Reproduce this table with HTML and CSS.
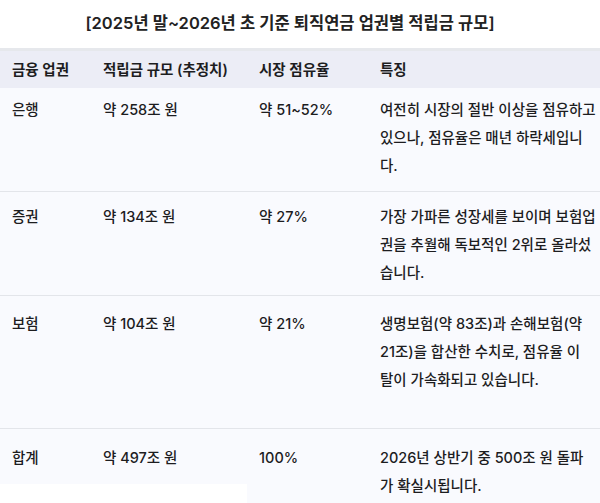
FILE: index.html
```html
<!DOCTYPE html>
<html lang="ko">
<head>
<meta charset="utf-8">
<link rel="stylesheet" href="styles.css">
</head>
<body>
<h1 class="title">[2025년 말~2026년 초 기준 퇴직연금 업권별 적립금 규모]</h1>
<div class="table">
  <div class="row head">
    <div class="cell">금융 업권</div>
    <div class="cell">적립금 규모 (추정치)</div>
    <div class="cell">시장 점유율</div>
    <div class="cell">특징</div>
  </div>
  <div class="row r1">
    <div class="cell">은행</div>
    <div class="cell">약 258조 원</div>
    <div class="cell">약 51~52%</div>
    <div class="cell">여전히 시장의 절반 이상을 점유하고<br>있으나, 점유율은 매년 하락세입니<br>다.</div>
  </div>
  <div class="row r2">
    <div class="cell">증권</div>
    <div class="cell">약 134조 원</div>
    <div class="cell">약 27%</div>
    <div class="cell">가장 가파른 성장세를 보이며 보험업<br>권을 추월해 독보적인 2위로 올라섰<br>습니다.</div>
  </div>
  <div class="row r3">
    <div class="cell">보험</div>
    <div class="cell">약 104조 원</div>
    <div class="cell">약 21%</div>
    <div class="cell">생명보험(약 83조)과 손해보험(약<br>21조)을 합산한 수치로, 점유율 이<br>탈이 가속화되고 있습니다.</div>
  </div>
  <div class="row r4">
    <div class="cell short">합계</div>
    <div class="cell short">약 497조 원</div>
    <div class="cell">100%</div>
    <div class="cell">2026년 상반기 중 500조 원 돌파<br>가 확실시됩니다.</div>
  </div>
</div>
</body>
</html>
```

FILE: styles.css
```css
html, body {
  margin: 0;
  padding: 0;
  background: #ffffff;
}
body {
  font-family: "Inter", "Noto Sans CJK KR", "Noto Sans", sans-serif;
  color: #1d1d1f;
  width: 600px;
  height: 503px;
  overflow: hidden;
}
.title {
  margin: 0;
  height: 48px;
  line-height: 46px;
  font-size: 16.5px;
  font-weight: 600;
  text-align: center;
  padding-right: 20px;
  color: #222;
}
.table {
  display: flex;
  flex-direction: column;
}
.row {
  display: grid;
  grid-template-columns: 91px 156px 121px 1fr;
  background: #f9fafe;
  border-bottom: 1px solid #e3e5ea;
  box-sizing: border-box;
  font-size: 14.5px;
  font-weight: 500;
  line-height: 28px;
}
.cell {
  padding: 0 8px 0 12px;
  white-space: nowrap;
}
.row.head {
  height: 40px;
  background: #ecedf6;
  border-top: 3px solid #e6e8ec;
  border-bottom: none;
  align-items: center;
  font-weight: 600;
  font-size: 14.5px;
}
.row.head .cell {
  line-height: 36px;
}
.r1 { height: 104px; padding-top: 8px; }
.r2 { height: 104px; padding-top: 11px; }
.r3 { height: 133px; padding-top: 14px; }
.r4 {
  height: 80px;
  padding-top: 15px;
  border-bottom: none;
  background: #f9fafe;
}
.r4 .cell.short {
  margin-top: -15px;
  padding-top: 15px;
  background: linear-gradient(#f9fafe 55px, #ffffff 55px);
}
```
